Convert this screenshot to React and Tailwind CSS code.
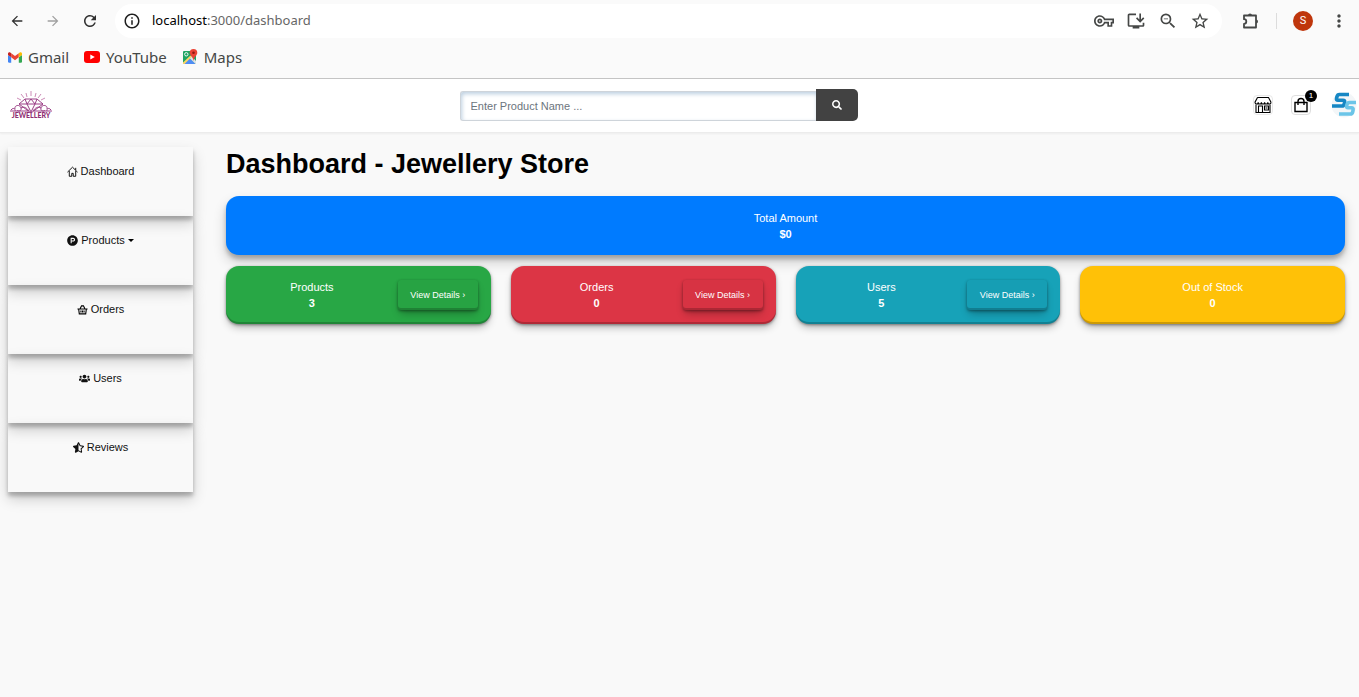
import {
  MdArrowBack,
  MdArrowForward,
  MdRefresh,
  MdInfoOutline,
  MdOutlineVpnKey,
  MdOutlineInstallDesktop,
  MdZoomOut,
  MdStarOutline,
  MdMoreVert,
} from "react-icons/md";
import { FaProductHunt, FaStarHalfAlt, FaSearch, FaUsers } from "react-icons/fa";

function GmailIcon() {
  return (
    <svg viewBox="0 0 24 18" className="h-[11px] w-[14px]" aria-hidden="true">
      <path d="M0 3v13.4C0 17.300.7 18 1.600 18H5.500V8.700L0 4.600z" fill="#4285f4" />
      <path d="M18.500 8.700V18h3.900c.9 0 1.600-.7 1.600-1.600V4.600z" fill="#34a853" />
      <path d="M5.500 8.700V1.600L12 6.500l6.500-4.900v7.100L12 13.600z" fill="#ea4335" />
      <path d="M18.500 1.600v7.100L24 4.600V2.500c0-2-2.300-3.200-3.900-2z" fill="#fbbc04" />
      <path d="M0 2.500v2.100l5.500 4.100V1.600L3.900.5C2.300-.7 0 .5 0 2.500z" fill="#c5221f" />
    </svg>
  );
}

function YouTubeIcon() {
  return (
    <svg viewBox="0 0 16 12" className="h-3 w-4" aria-hidden="true">
      <rect width="16" height="12" rx="3" fill="#f00" />
      <path d="M6.300 3.400v5.200L10.800 6z" fill="#fff" />
    </svg>
  );
}

function MapsIcon() {
  return (
    <svg viewBox="0 0 16 16" className="size-4" aria-hidden="true">
      <rect x="1" y="2" width="13" height="13" rx="1" fill="#1fa463" />
      <path d="M1.500 15L7.500 9l6 6z" fill="#4f8df5" />
      <path d="M7.500 9l2-2L14 12v3h-.5z" fill="#dfe3e8" />
      <path d="M1 13.500L8.500 6.500l1.200 1.200L2.500 15H1z" fill="#fdd663" />
      <circle cx="4.300" cy="5.300" r="1.700" fill="none" stroke="#fff" strokeWidth=".9" />
      <path d="M11.500 0A3.800 3.800 0 0 0 7.700 3.800c0 2.800 3.300 3.800 3.600 7.700h.4c.3-3.900 3.600-4.900 3.600-7.700A3.800 3.800 0 0 0 11.500 0z" fill="#ea4335" />
      <circle cx="11.500" cy="3.700" r="1.300" fill="#8b1a12" />
    </svg>
  );
}

function PuzzleIcon() {
  return (
    <svg viewBox="0 0 20 20" className="size-5" aria-hidden="true">
      <path d="M4 4.500h12v12H4v-3.700a2.300 2.300 0 0 0 0-4.600z" fill="none" stroke="currentColor" strokeWidth="1.800" strokeLinejoin="round" />
      <path d="M8 4.500a2 2 0 0 1 4 0zM16 8.500a2 2 0 0 1 0 4z" fill="currentColor" />
    </svg>
  );
}

function JewelleryLogo() {
  return (
    <svg viewBox="0 0 44 30" className="h-[30px] w-11" aria-hidden="true">
      <g fill="none" stroke="#bf6fa5" strokeWidth=".8">
        <path d="M22 1v5M17 3l1 4M27 3l-1 4M12 4l3 4M32 4l-3 4M8 8l4 2M36 8l-4 2" />
      </g>
      <g fill="none" stroke="#9b3f86" strokeWidth="1">
        <path d="M16 9h12l6 5-12 9-12-9zM10 14h24M16 9l2 5 4 8 4-8 2-5M18 14l4-5 4 5" />
        <path d="M2 20c2-3 5-1 4 1M6 19c-1-4 5-5 6-1 1 3-3 4-4 2M12 18c3-2 6 0 8 3M1 21h18" />
        <path d="M42 20c-2-3-5-1-4 1M38 19c1-4-5-5-6-1-1 3 3 4 4 2M32 18c-3-2-6 0-8 3M43 21H25" />
      </g>
      <text x="22" y="28" textAnchor="middle" fontSize="7" fontWeight="900" fill="#8f2f72" className="font-['Lato',sans-serif]">
        JEWELLERY
      </text>
    </svg>
  );
}

function ShopIcon() {
  return (
    <svg viewBox="0 0 18 18" className="size-[18px]" fill="none" stroke="#000" strokeWidth="1.100" aria-hidden="true">
      <path d="M3.500 1.500h11l2.500 4.700M3.500 1.500L1 6.200c0 2.400 3.200 2.400 3.200 0 0 2.400 3.200 2.400 3.200 0 0 2.400 3.200 2.400 3.200 0 0 2.400 3.200 2.400 3.200 0 0 2.400 3.200 2.400 3.200 0" />
      <path d="M2 8.500v8h14v-8M4.500 16.500V10h4v6.500M10.500 10h4v4h-4zM11.500 12h2" />
    </svg>
  );
}

function BagIcon() {
  return (
    <svg viewBox="0 0 18 18" className="size-[18px]" fill="none" stroke="#000" strokeWidth="1.400" aria-hidden="true">
      <path d="M3 6.500h12v9H3zM6 9V5.500a3 3 0 0 1 6 0V9" />
    </svg>
  );
}

function AccountLogo() {
  return (
    <svg viewBox="0 0 26 28" className="h-7 w-[26px]" aria-hidden="true">
      <circle cx="13" cy="14" r="12.500" fill="#f3f6f8" />
      <g fill="none" strokeLinejoin="round" strokeWidth="3.600">
        <path d="M18 3.500H8.500q-2 0-2.500 2l-.5 2q-.3 1.700 1.400 1.700H12q2 0 1.600 2l-.3 1.800q-.5 2-2.300 2H1" stroke="#1687c4" />
        <path d="M25 11.500h-6.500q-2 0-2.500 2l-.4 1.600q-.3 1.700 1.400 1.700h3.500q2 0 1.600 2l-.4 2.200q-.5 2-2.400 2H8" stroke="#6cc5e8" />
      </g>
    </svg>
  );
}

function HomeIcon({ className }) {
  return (
    <svg viewBox="0 0 12 12" className={className} fill="none" stroke="#000" strokeWidth="1" aria-hidden="true">
      <path d="M.5 6.700L6 1.300l5.500 5.400M2.500 5.500v5.700h2.700V8h1.600v3.200h2.700V5.500M9.500 4.500V2" />
    </svg>
  );
}

function BasketIcon({ className }) {
  return (
    <svg viewBox="0 0 12 12" className={className} fill="none" stroke="#000" strokeWidth="1.200" aria-hidden="true">
      <path d="M.5 5.500h11M3.500 5L5 2h2l1.500 3M1.800 5.500l.7 5.300h7l.7-5.300" />
      <path d="M4.300 7v2.300M6 7v2.300M7.700 7v2.300" />
    </svg>
  );
}

const bookmarks = [
  { label: "Gmail", Icon: GmailIcon },
  { label: "YouTube", Icon: YouTubeIcon },
  { label: "Maps", Icon: MapsIcon },
];

const addressActions = [
  { label: "Manage passwords", Icon: MdOutlineVpnKey },
  { label: "Install app", Icon: MdOutlineInstallDesktop },
  { label: "Zoom", Icon: MdZoomOut },
  { label: "Bookmark this page", Icon: MdStarOutline },
];

const menu = [
  { label: "Dashboard", Icon: HomeIcon },
  { label: "Products", Icon: FaProductHunt, dropdown: true },
  { label: "Orders", Icon: BasketIcon },
  { label: "Users", Icon: FaUsers },
  { label: "Reviews", Icon: FaStarHalfAlt },
];

const stats = [
  { label: "Products", value: "3", color: "bg-[#28a745]", details: true },
  { label: "Orders", value: "0", color: "bg-[#dc3545]", details: true },
  { label: "Users", value: "5", color: "bg-[#17a2b8]", details: true },
  { label: "Out of Stock", value: "0", color: "bg-[#ffc107]", details: false },
];

function BrowserBar() {
  return (
    <div className="border-b border-[#c4c4c4] bg-[#fafafa] pb-[6px] font-['Noto_Sans','Open_Sans',sans-serif] text-[#454746]">
      <div className="flex h-[42px] items-center">
        <div className="flex w-[115px] items-center gap-5 pl-[9px]">
          <button type="button" aria-label="Back" className="text-[#303030]"><MdArrowBack className="size-4" /></button>
          <button type="button" aria-label="Forward" className="text-[#a0a0a0]"><MdArrowForward className="size-4" /></button>
          <button type="button" aria-label="Reload" className="text-[#303030]"><MdRefresh className="size-[18px]" /></button>
        </div>
        <div className="flex h-[34px] flex-1 items-center rounded-full bg-white pr-3 pl-2">
          <button type="button" aria-label="Site information" className="text-[#1f1f1f]"><MdInfoOutline className="size-[18px]" /></button>
          <p className="ml-[11px] flex-1 text-[13px] text-[#666]">
            <span className="text-black">localhost</span>:3000/dashboard
          </p>
          <div className="flex items-center gap-3">
            {addressActions.map(({ label, Icon }) => (
              <button key={label} type="button" aria-label={label}><Icon className="size-5" /></button>
            ))}
          </div>
        </div>
        <div className="flex items-center pr-[10px] pl-[18px]">
          <button type="button" aria-label="Extensions"><PuzzleIcon /></button>
          <span className="mr-4 ml-4 h-4 w-px bg-[#dcdcdc]" />
          <button type="button" aria-label="Profile" className="mr-4 flex size-5 items-center justify-center rounded-full bg-[#bf360c] font-['Roboto',sans-serif] text-[11px] text-white">S</button>
          <button type="button" aria-label="Browser menu"><MdMoreVert className="size-5" /></button>
        </div>
      </div>
      <nav aria-label="Bookmarks" className="flex h-[30px] items-center gap-[15px] px-2">
        {bookmarks.map(({ label, Icon }) => (
          <a key={label} href="#" className="flex items-center gap-[6px] text-[15px] leading-5">
            <Icon />
            {label}
          </a>
        ))}
      </nav>
    </div>
  );
}

function StoreHeader() {
  return (
    <header className="flex h-[54px] items-center justify-between border-b border-[#ececec] bg-white pb-px shadow-[0_1px_2px_rgba(0,0,0,0.05)]">
      <a href="#" aria-label="Jewellery home" className="w-16 pl-[9px]"><JewelleryLogo /></a>
      <form className="flex w-[398px] items-end" onSubmit={(e) => e.preventDefault()}>
        <input
          type="text"
          aria-label="Product name"
          placeholder="Enter Product Name ..."
          className="h-[30px] min-w-0 flex-1 rounded-l-[3px] border border-r-0 border-[#ced4da] bg-white px-[10px] text-[11px] shadow-[inset_1px_2px_4px_#bccfe0] outline-none placeholder:text-[#6c757d]"
        />
        <button type="submit" aria-label="Search" className="flex h-8 w-[42px] items-center justify-center rounded-r-[5px] bg-[#424242] text-white">
          <FaSearch className="size-[10px]" />
        </button>
      </form>
      <div className="flex items-center pr-[2px]">
        <a href="#" aria-label="Shop" className="rounded-sm border border-[#e8e8e8]"><ShopIcon /></a>
        <a href="#" aria-label="Cart" className="relative ml-[18px] rounded-sm border border-[#dedede]">
          <BagIcon />
          <span className="absolute -top-[6px] -right-[7px] flex size-3 items-center justify-center rounded-full bg-black text-[8px] text-white">1</span>
        </a>
        <a href="#" aria-label="Account" className="ml-5"><AccountLogo /></a>
      </div>
    </header>
  );
}

function Sidebar() {
  return (
    <nav aria-label="Admin" className="w-[185px] shrink-0">
      <ul>
        {menu.map(({ label, Icon, dropdown }) => (
          <li key={label} className="h-[69px] pt-4 shadow-[0_7px_13px_rgba(0,0,0,0.19),0_4px_4px_rgba(0,0,0,0.23)]">
            <a href="#" className="flex items-center justify-center gap-[3px] text-[11px] leading-4 text-[#111]">
              <Icon className="size-[11px]" />
              {label}
              {dropdown && <span className="border-x-[3px] border-t-[3px] border-x-transparent border-t-black" />}
            </a>
          </li>
        ))}
      </ul>
    </nav>
  );
}

export default function App() {
  return (
    <div className="min-h-screen bg-[#f9f9f9] font-['Liberation_Sans',Arial,sans-serif]">
      <BrowserBar />
      <StoreHeader />
      <div className="flex gap-[33px] pt-[14px] pr-[14px] pl-2">
        <Sidebar />
        <main className="min-w-0 flex-1">
          <h1 className="text-[27px] leading-[34px] font-bold text-black">Dashboard - Jewellery Store</h1>
          <section className="mt-[15px] rounded-[13px] bg-[#007bff] pt-[14px] pb-[13px] text-center text-[11px] leading-4 text-white shadow-[0_7px_13px_rgba(0,0,0,0.19),0_4px_4px_rgba(0,0,0,0.23)]">
            <p>Total Amount</p>
            <p className="font-bold">$0</p>
          </section>
          <div className="mt-[11px] grid grid-cols-4 gap-5">
            {stats.map(({ label, value, color, details }) => (
              <section
                key={label}
                className={`flex items-center rounded-[13px] py-[13px] text-[11px] leading-4 text-white shadow-[0_1px_3px_rgba(0,0,0,0.4),0_5px_9px_-2px_rgba(0,0,0,0.3),inset_0_-2px_0_rgba(0,0,0,0.2)] ${color}`}
              >
                <div className="flex-1 text-center">
                  <p>{label}</p>
                  <p className="font-bold">{value}</p>
                </div>
                {details && (
                  <button type="button" className="mr-[13px] h-[30px] w-20 rounded-[3px] bg-black/2 text-[9px] shadow-[0_1px_3px_rgba(0,0,0,0.4),0_5px_9px_-2px_rgba(0,0,0,0.3),inset_0_-2px_0_rgba(0,0,0,0.2)]">
                    View Details ›
                  </button>
                )}
              </section>
            ))}
          </div>
        </main>
      </div>
    </div>
  );
}
